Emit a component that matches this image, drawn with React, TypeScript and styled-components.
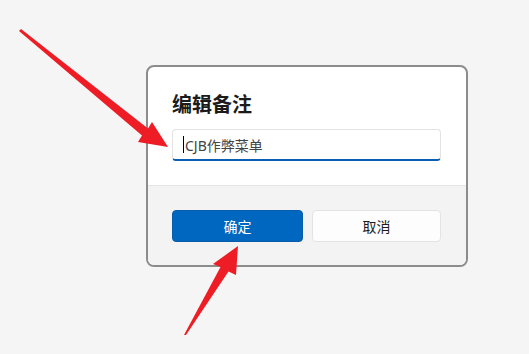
import styled, { createGlobalStyle } from 'styled-components';

const GlobalStyle = createGlobalStyle`
  html, body {
    margin: 0;
    padding: 0;
    background: #f5f5f5;
  }
  body {
    font-family: "Noto Sans", "Noto Sans CJK SC", sans-serif;
  }
`;

function App() {
  return (
    <Page>
      <GlobalStyle />
      <Dialog>
        <Body>
          <Title>编辑备注</Title>
          <Field>
            <Caret />
            CJB作弊菜单
          </Field>
        </Body>
        <Footer>
          <PrimaryButton>确定</PrimaryButton>
          <SecondaryButton>取消</SecondaryButton>
        </Footer>
      </Dialog>
      <Arrows viewBox="0 0 529 354" width="529" height="354">
        <polygon points="19,31 21,29 148,128.5 152,122 168,147 138,142 142,135.5" fill="#ee1d25" />
        <polygon points="184,335 186,335 228.5,271.5 236,275 238,246 213,264 220.5,267" fill="#ee1d25" />
      </Arrows>
    </Page>
  );
}

export default App;

const Page = styled.div`
  position: relative;
  width: 529px;
  height: 354px;
  overflow: hidden;
  padding: 65px 0 0 146px;
  box-sizing: border-box;
`;

const Dialog = styled.div`
  width: 322px;
  box-sizing: border-box;
  border: 2px solid #8c8c8c;
  border-radius: 8px;
  overflow: hidden;
  background: #ffffff;
`;

const Body = styled.div`
  display: flex;
  flex-direction: column;
  gap: 11px;
  padding: 25px 25px 24px 24px;
  border-bottom: 1px solid #e5e5e5;
`;

const Title = styled.h2`
  margin: 0;
  font-size: 20px;
  line-height: 26px;
  font-weight: 700;
  color: #1b1b1b;
`;

const Field = styled.div`
  display: flex;
  align-items: center;
  height: 32px;
  box-sizing: border-box;
  padding-left: 10px;
  border: 1px solid #e3e3e3;
  border-bottom: 2px solid #0a5fb4;
  border-radius: 4px;
  font-size: 14px;
  color: #444444;
`;

const Caret = styled.span`
  display: inline-block;
  width: 1px;
  height: 17px;
  margin-right: 1px;
  background: #000000;
`;

const Footer = styled.div`
  display: grid;
  grid-template-columns: 131px 129px;
  gap: 9px;
  padding: 24px 25px 23px 24px;
  background: #f3f3f3;
`;

const PrimaryButton = styled.button`
  height: 32px;
  border: 1px solid #0a5ba8;
  border-radius: 4px;
  background: #0067c0;
  color: #ffffff;
  font-family: "Noto Sans CJK SC", sans-serif;
  font-size: 14px;
`;

const SecondaryButton = styled(PrimaryButton)`
  border: 1px solid #e3e3e3;
  background: #fdfdfd;
  color: #1b1b1b;
`;

const Arrows = styled.svg`
  position: absolute;
  left: 0;
  top: 0;
  pointer-events: none;
`;
